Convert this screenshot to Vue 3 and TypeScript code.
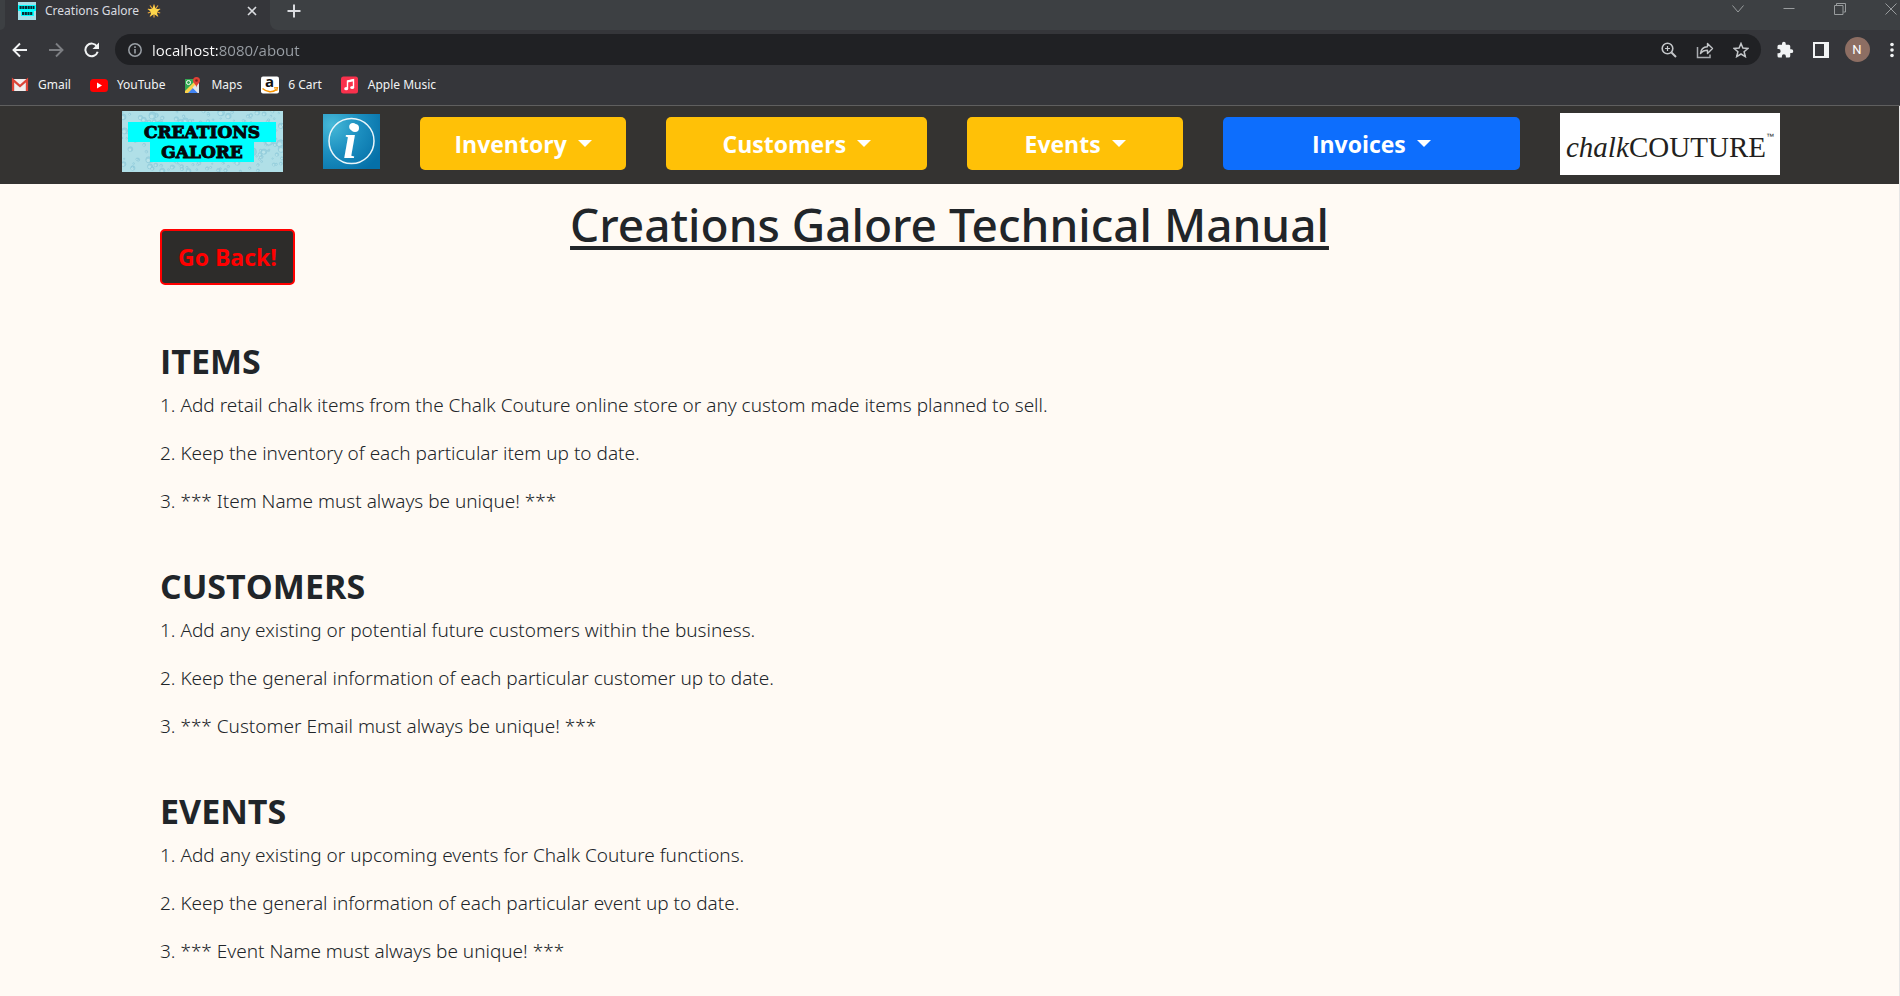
<script setup lang="ts">
interface Bookmark { id: string; label: string }
interface Menu { label: string; kind: string }
interface Section { title: string; lines: string[] }
interface Drop { x: number; y: number; r: number }

const bookmarks: Bookmark[] = [
  { id: 'gmail', label: 'Gmail' },
  { id: 'youtube', label: 'YouTube' },
  { id: 'maps', label: 'Maps' },
  { id: 'cart', label: '6 Cart' },
  { id: 'music', label: 'Apple Music' },
]

const menus: Menu[] = [
  { label: 'Inventory', kind: 'inventory' },
  { label: 'Customers', kind: 'customers' },
  { label: 'Events', kind: 'events' },
  { label: 'Invoices', kind: 'invoices' },
]

const sections: Section[] = [
  {
    title: 'ITEMS',
    lines: [
      '1. Add retail chalk items from the Chalk Couture online store or any custom made items planned to sell.',
      '2. Keep the inventory of each particular item up to date.',
      '3. *** Item Name must always be unique! ***',
    ],
  },
  {
    title: 'CUSTOMERS',
    lines: [
      '1. Add any existing or potential future customers within the business.',
      '2. Keep the general information of each particular customer up to date.',
      '3. *** Customer Email must always be unique! ***',
    ],
  },
  {
    title: 'EVENTS',
    lines: [
      '1. Add any existing or upcoming events for Chalk Couture functions.',
      '2. Keep the general information of each particular event up to date.',
      '3. *** Event Name must always be unique! ***',
    ],
  },
]

// Water droplets scattered over the logo background
let seed = 11
const random = (): number => {
  seed = (seed * 16807) % 2147483647
  return seed / 2147483647
}
const drops: Drop[] = Array.from({ length: 260 }, () => ({
  x: random() * 161,
  y: random() * 61,
  r: 0.7 + random() * random() * 3.5,
}))
</script>

<template>
  <div class="window">
    <header class="browser">
      <div class="tabstrip">
        <div class="strip-start"></div>
        <div class="tab">
          <svg class="favicon" width="18" height="18" viewBox="0 0 18 18">
            <rect width="18" height="18" fill="#a5dfe8" />
            <path d="M0 3h18v6h-2v5H3V9H0z" fill="#0ff" />
            <path d="M1.500 5.500h15M4 11.500h10.500" stroke="#0a2a33" stroke-width="3" stroke-dasharray="2.200 .5" />
          </svg>
          <span class="tab-title">Creations Galore</span>
          <svg class="star" width="14" height="14" viewBox="0 0 14 14">
            <path d="M7 .5v13M.8 5l12.400 4M3 1.500l8 11M11 1.500l-8 11M.8 9l12.400-4" stroke="#e9a53a" stroke-width="1.200" />
            <path d="M7 1l1.800 3.700 4 .6-2.900 2.900.7 4L7 10.300l-3.600 1.900.7-4L1.200 5.300l4-.6z" fill="#fdd64b" />
          </svg>
          <button class="plain close" aria-label="Close tab">
            <svg width="10" height="10" viewBox="0 0 10 10"><path d="M1 1l8 8M9 1L1 9" stroke="#dadce0" stroke-width="1.600" /></svg>
          </button>
        </div>
        <div class="strip-rest">
          <button class="plain" aria-label="New tab">
            <svg width="14" height="14" viewBox="0 0 14 14"><path d="M7 .5v13M.5 7h13" stroke="#dadce0" stroke-width="2" /></svg>
          </button>
          <div class="window-controls">
            <button class="plain" aria-label="Search tabs"><svg width="12" height="12" viewBox="0 0 12 12"><path d="M.5 2.500L6 9l5.500-6.500" fill="none" stroke="#999c9e" /></svg></button>
            <button class="plain" aria-label="Minimize"><svg width="12" height="12" viewBox="0 0 12 12"><path d="M.5 5.500h11" stroke="#999c9e" /></svg></button>
            <button class="plain" aria-label="Restore"><svg width="12" height="12" viewBox="0 0 12 12"><path d="M.5 2.500h8.500v9H.5zM2.500 2.500v-2h9v8.500H9.500" fill="none" stroke="#999c9e" /></svg></button>
            <button class="plain" aria-label="Close"><svg width="12" height="12" viewBox="0 0 12 12"><path d="M.5 .5l11 11M11.500 .5l-11 11" stroke="#999c9e" /></svg></button>
          </div>
        </div>
      </div>

      <div class="toolbar">
        <button class="plain tool" aria-label="Back">
          <svg width="16" height="16" viewBox="0 0 16 16"><path d="M15 8H2M8 1.500L1.500 8 8 14.500" fill="none" stroke="#f1f3f4" stroke-width="1.900" /></svg>
        </button>
        <button class="plain tool" aria-label="Forward">
          <svg width="16" height="16" viewBox="0 0 16 16"><path d="M1 8h13M8 1.500L14.500 8 8 14.500" fill="none" stroke="#7c7e82" stroke-width="1.900" /></svg>
        </button>
        <button class="plain tool" aria-label="Reload">
          <svg width="16" height="16" viewBox="0 0 16 16"><path d="M13 4.500A6.300 6.300 0 1 0 13.700 9.800" fill="none" stroke="#f1f3f4" stroke-width="2" /><path d="M15 .5v6.500h-6.500z" fill="#f1f3f4" /></svg>
        </button>
        <div class="omnibox">
          <svg width="14" height="14" viewBox="0 0 14 14"><circle cx="7" cy="7" r="6.200" fill="none" stroke="#9aa0a6" stroke-width="1.500" /><path d="M7 6v4.500M7 3.300v1.700" stroke="#9aa0a6" stroke-width="1.600" /></svg>
          <input class="url" type="text" value="localhost:8080/about" aria-label="Address" />
          <button class="plain tool" aria-label="Zoom">
            <svg width="16" height="16" viewBox="0 0 16 16"><circle cx="6.500" cy="6.500" r="5.300" fill="none" stroke="#c4c7ca" stroke-width="1.600" /><path d="M10.500 10.500l4.500 4.500" stroke="#c4c7ca" stroke-width="2" /><path d="M6.500 4v5M4 6.500h5" stroke="#c4c7ca" stroke-width="1.200" /></svg>
          </button>
          <button class="plain tool" aria-label="Share">
            <svg width="18" height="18" viewBox="0 0 18 18"><path d="M1.500 6v10.500h12.500v-3" fill="none" stroke="#a9acb0" stroke-width="1.500" /><path d="M4.500 12.500c.4-4.500 3-6.500 7-6.700V2.500l5 5-5 5V9.300c-3 0-5.200.9-7 3.200z" fill="none" stroke="#c4c7ca" stroke-width="1.400" stroke-linejoin="round" /></svg>
          </button>
          <button class="plain tool" aria-label="Bookmark">
            <svg width="16" height="16" viewBox="0 0 16 16"><path d="M8 1.500l1.900 4.600 5 .4-3.800 3.200 1.200 4.900L8 12l-4.300 2.600 1.200-4.900L1.100 6.500l5-.4z" fill="none" stroke="#c4c7ca" stroke-width="1.500" /></svg>
          </button>
        </div>
        <button class="plain tool" aria-label="Extensions">
          <svg width="18" height="18" viewBox="0 0 24 24"><path d="M20.500 11H19V7a2 2 0 0 0-2-2h-4V3.500a2.500 2.500 0 0 0-5 0V5H4a2 2 0 0 0-2 2v3.800h1.500a2.700 2.700 0 0 1 0 5.400H2V20a2 2 0 0 0 2 2h3.800v-1.500a2.700 2.700 0 0 1 5.400 0V22H17a2 2 0 0 0 2-2v-4h1.500a2.500 2.500 0 0 0 0-5z" fill="#f1f3f4" /></svg>
        </button>
        <button class="plain tool" aria-label="Side panel">
          <svg width="16" height="16" viewBox="0 0 16 16"><rect x="1" y="1" width="14" height="14" fill="none" stroke="#f1f3f4" stroke-width="2" /><path d="M11 1h4v14h-4z" fill="#f1f3f4" /></svg>
        </button>
        <button class="plain tool" aria-label="Profile"><span class="avatar">N</span></button>
        <button class="plain kebab" aria-label="Menu">
          <svg width="16" height="16" viewBox="0 0 16 16"><circle cx="8" cy="2.500" r="1.800" fill="#f1f3f4" /><circle cx="8" cy="8" r="1.800" fill="#f1f3f4" /><circle cx="8" cy="13.500" r="1.800" fill="#f1f3f4" /></svg>
        </button>
      </div>

      <nav class="bookmarks" aria-label="Bookmarks">
        <a v-for="b in bookmarks" :key="b.id" href="#">
          <svg width="18" height="18" viewBox="0 0 18 18">
            <template v-if="b.id === 'gmail'">
              <path d="M1 3h16v12H1z" fill="#f1eeee" />
              <path d="M3 15V6l6 5 6-5v9" fill="none" stroke="#d5d5d5" />
              <path d="M2 15V4l7 6 7-6v11" fill="none" stroke="#dc4437" stroke-width="2.200" />
            </template>
            <template v-else-if="b.id === 'youtube'">
              <rect y="3" width="18" height="13" rx="3.500" fill="#f00" /><path d="M7 6.500l5 3-5 3z" fill="#fff" />
            </template>
            <template v-else-if="b.id === 'maps'">
              <path d="M1 3h14v14H1z" fill="#34a853" /><path d="M1 17L15 5v12z" fill="#e3e5e8" /><path d="M3 17l5.500-5.500L14 17z" fill="#4285f4" /><path d="M1 15L13 3h2v3L4 17H1z" fill="#fbd14b" /><path d="M8.500 11.500L14 17h1v-3l-4-5z" fill="#e3e5e8" />
              <circle cx="4.500" cy="6.500" r="2" fill="none" stroke="#fff" />
              <path d="M12.500 1A3.500 3.500 0 0 1 16 4.500c0 3-3 3.500-3.500 7-.5-3.500-3.500-4-3.500-7A3.500 3.500 0 0 1 12.500 1z" fill="#e04135" /><circle cx="12.500" cy="4.500" r="1.300" fill="#80231c" />
            </template>
            <template v-else-if="b.id === 'cart'">
              <rect width="18" height="17" y=".5" rx="2" fill="#fff" />
              <text x="8.500" y="11" text-anchor="middle" class="cart-letter">a</text>
              <path d="M1.500 12.500c4.500 4 10 4 14 1" fill="none" stroke="#f79400" stroke-width="1.600" /><path d="M13 11.800l3.500-.2-.8 3.200" fill="none" stroke="#f79400" stroke-width="1.200" />
            </template>
            <template v-else>
              <rect width="17" height="17" y=".5" rx="2.500" fill="#f9314c" />
              <path d="M6.500 12.500V5l6-1.300v7.500" fill="none" stroke="#fff" stroke-width="1.400" /><path d="M6.500 5.500l6-1.300" stroke="#fff" stroke-width="2" /><ellipse cx="5.200" cy="12.700" rx="2" ry="1.600" fill="#fff" /><ellipse cx="11.200" cy="11.500" rx="2" ry="1.600" fill="#fff" />
            </template>
          </svg>
          {{ b.label }}
        </a>
      </nav>
    </header>

    <div class="page">
      <nav class="navbar" aria-label="Main">
        <a class="brand" href="#" aria-label="Creations Galore">
          <svg width="161" height="61" viewBox="0 0 161 61">
            <rect width="161" height="61" fill="#b0dfe7" />
            <g v-for="(d, i) in drops" :key="i">
              <circle :cx="d.x" :cy="d.y" :r="d.r" fill="#9bd2df" stroke="#86c3d3" stroke-width=".4" />
              <circle :cx="d.x - d.r * 0.2" :cy="d.y + d.r * 0.25" :r="d.r * 0.55" fill="#bbe4ea" />
            </g>
            <path d="M6 11h148v20H6zM28 31h104v20H28z" fill="#0ff" />
            <text x="80" y="27" text-anchor="middle" class="logo-text">CREATIONS</text>
            <text x="80" y="47" text-anchor="middle" class="logo-text">GALORE</text>
          </svg>
        </a>
        <a class="about" href="#" aria-label="About">
          <svg width="57" height="55" viewBox="0 0 57 55">
            <defs>
              <radialGradient id="infoFill" cx=".15" cy=".2" r="1">
                <stop offset="0" stop-color="#47b9d8" /><stop offset=".5" stop-color="#1c8fc0" /><stop offset="1" stop-color="#0570a8" />
              </radialGradient>
            </defs>
            <rect width="57" height="55" fill="url(#infoFill)" />
            <circle cx="28.500" cy="27" r="22.500" fill="none" stroke="#e9f5fa" stroke-width="1.500" />
            <text x="27" y="44" text-anchor="middle" class="info-letter">i</text>
            <circle cx="32" cy="14" r="4" fill="#fff" />
          </svg>
        </a>
        <button v-for="m in menus" :key="m.kind" class="menu" :class="m.kind" aria-haspopup="true">
          {{ m.label }}<span class="caret"></span>
        </button>
        <a class="partner" href="#" aria-label="Chalk Couture">
          <svg width="220" height="62" viewBox="0 0 220 62">
            <rect width="220" height="62" fill="#fff" />
            <text x="6" y="44" class="chalk">chalk</text>
            <text x="69" y="44" class="couture">COUTURE</text>
            <text x="206" y="26" class="mark">™</text>
          </svg>
        </a>
      </nav>

      <main>
        <div class="heading">
          <button class="back">Go Back!</button>
          <h1>Creations Galore Technical Manual</h1>
        </div>
        <section v-for="s in sections" :key="s.title">
          <h2>{{ s.title }}</h2>
          <p v-for="line in s.lines" :key="line">{{ line }}</p>
        </section>
      </main>
    </div>
  </div>
</template>

<style>
body { margin: 0; background: #fffaf4; }
</style>

<style scoped>
.window, .window * { box-sizing: border-box; }
.window { font-family: "Noto Sans", "Open Sans", sans-serif; color: #212529; }
svg { display: block; flex: none; }
a { color: inherit; text-decoration: none; }
.plain { display: flex; align-items: center; justify-content: center; padding: 0; border: 0; background: none; }

.browser { background: #35363a; border-bottom: 1px solid #5f5f5f; }
.tabstrip { display: flex; height: 30px; background: #35363a; }
.strip-start { width: 5px; background: #3d4043; border-bottom-right-radius: 8px; }
.tab { display: flex; align-items: center; width: 265px; height: 22px; padding: 0 13px; color: #dadce0; font-size: 12px; line-height: 16px; }
.tab-title { margin: 0 8px 0 9px; }
.close { margin-left: auto; }
.strip-rest { display: flex; flex: 1; justify-content: space-between; padding: 0 3px 8px 17px; background: #3d4043; border-bottom-left-radius: 8px; }
.window-controls { display: flex; align-items: center; gap: 39px; padding-bottom: 5px; }

.toolbar { display: flex; align-items: center; height: 39px; padding-left: 2px; }
.tool { width: 36px; height: 30px; flex: none; }
.kebab { width: 25px; height: 30px; flex: none; justify-content: flex-end; }
.omnibox { display: flex; flex: 1; align-items: center; height: 31px; margin: 0 6px 0 5px; padding: 0 2px 0 13px; border-radius: 16px; background: #202124; }
.url {
  flex: 1; min-width: 0; height: 22px; margin-left: 10px; padding: 0; border: 0; outline: 0; font-family: "Open Sans", sans-serif; font-size: 15px; line-height: 22px;
  background: linear-gradient(90deg, #fff 66px, #9aa0a6 66px); -webkit-background-clip: text; background-clip: text; color: transparent;
}
.avatar { width: 25px; height: 25px; border-radius: 50%; background: #8d6e63; color: #fff; font: 13px/25px Roboto, sans-serif; text-align: center; }

.bookmarks { display: flex; align-items: center; gap: 19px; height: 36px; padding: 0 11px 5px; color: #f1f3f4; font-size: 12px; }
.bookmarks a { display: flex; align-items: center; gap: 9px; white-space: nowrap; }
.cart-letter { font: bold 15px "Open Sans", sans-serif; fill: #111; }

.page { border-right: 1px solid #e6e6e6; }
.navbar { display: flex; align-items: flex-start; gap: 40px; height: 78px; padding: 5px 119px 0 122px; background: #343331; }
.about { margin-top: 3px; }
.partner { margin-top: 2px; }
.logo-text { font: bold 17px "DejaVu Serif", serif; fill: #05080c; stroke: #05080c; stroke-width: 1px; }
.info-letter { font: italic bold 50px "Liberation Serif", serif; fill: #fff; }
.chalk { font: italic 29px "Liberation Serif", serif; fill: #231f20; }
.couture { font: 29px "Liberation Serif", serif; fill: #231f20; }
.mark { font: 8px "Liberation Sans", sans-serif; fill: #231f20; }
.menu {
  display: flex; align-items: center; justify-content: center; gap: 11px; height: 53px; margin-top: 6px; padding: 0;
  border: 0; border-radius: 5px; background: #ffc107; color: #fff; font-family: "Open Sans", sans-serif; font-size: 23px; font-weight: 700;
}
.inventory { flex: 206 1 0; }
.customers { flex: 261 1 0; }
.events { flex: 215 1 0; }
.invoices { flex: 297 1 0; background: #0d6efd; }
.caret { border-top: 7px solid #fff; border-left: 7px solid transparent; border-right: 7px solid transparent; }

main { padding: 16px 160px 0; }
.heading { display: grid; grid-template-columns: 1fr auto 1fr; align-items: start; height: 141px; }
.back { justify-self: start; width: 135px; height: 56px; margin-top: 29px; padding: 0; border: 2px solid #f00; border-radius: 5px; background: #2d2c2a; color: #f00; font-family: "Open Sans", sans-serif; font-size: 23px; font-weight: 700; }
h1 { margin: 0; font-size: 46px; font-weight: 500; line-height: 48px; text-decoration: underline 4px; text-underline-offset: 4px; text-decoration-skip-ink: none; white-space: nowrap; }
section { height: 225px; }
h2 { margin: 0; padding-bottom: 12px; font-family: "Open Sans", sans-serif; font-size: 34px; font-weight: 700; line-height: 40px; }
p { margin: 0 0 24px; font-size: 19px; font-weight: 300; line-height: 24px; }
</style>
